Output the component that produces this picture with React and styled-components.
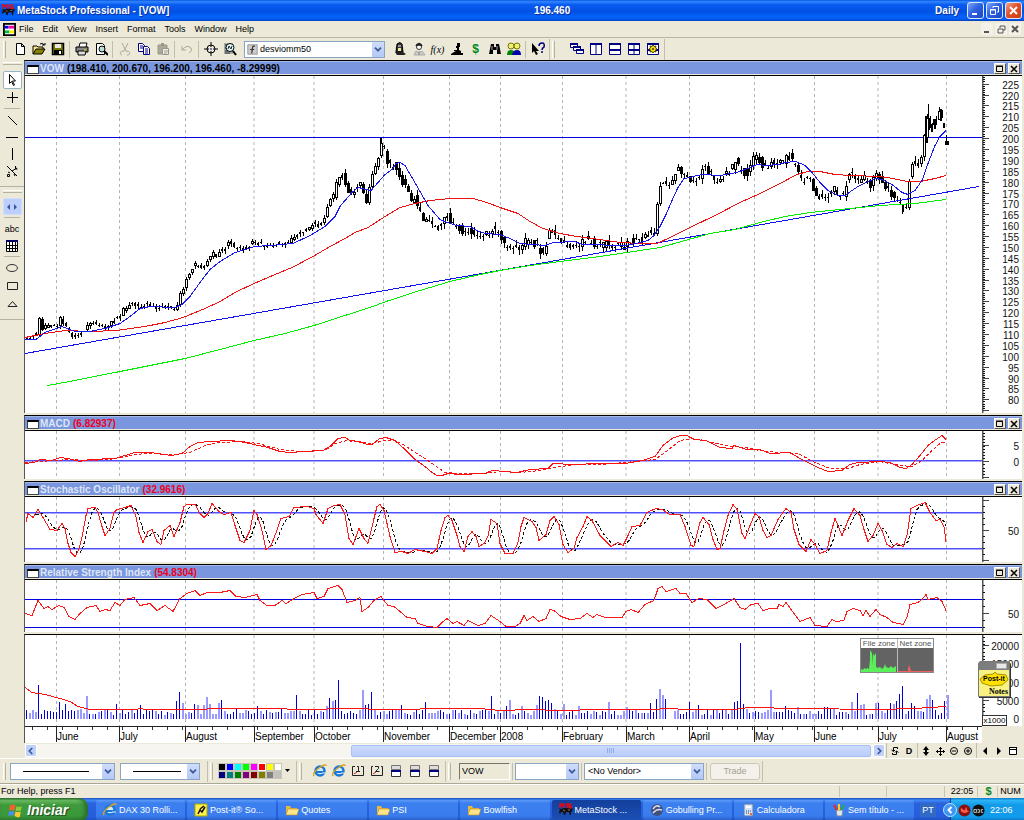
import React from 'react';
import styled, { createGlobalStyle, css } from 'styled-components';

const GlobalStyle = createGlobalStyle`
    * {
        box-sizing: border-box;
    }

    body {
        margin: 0;
        background: #ece9d8;
        color: #000;
        font-family: 'Liberation Sans', Arial, sans-serif;
        font-size: 9px;
    }

    button, input, select {
        font: inherit;
        color: inherit;
        margin: 0;
        padding: 0;
    }
`;

/* ---------- chart data ---------- */

// Time axis: [x position, label, wide line]
const MONTHS = [
    [56, 'June'], [119, 'July'], [185, 'August'], [254, 'September', true], [314, 'October', true],
    [383, 'November'], [449, 'December'], [500, '2008'], [562, 'February'], [626, 'March', true],
    [689, 'April'], [754, 'May'], [814, 'June'], [878, 'July', true], [946, 'August'],
];

const CLOSES = '25,337 35,337 39,320 42,329 47,325 52,326 57,325 60,318 65,325 70,334 76,338 80,332 85,331 88,324 92,322 100,327 107,326 112,320 119,318 123,310 128,306 134,303 139,308 145,303 150,306 156,309 162,307 170,307 175,310 179,297 184,285 187,277 191,269 195,264 200,267 204,267 209,258 213,254 216,259 219,252 225,248 228,243 230,241 234,248 240,248 244,250 248,246 254,241 260,244 266,247 270,247 275,244 282,243 287,243 292,238 297,233 303,230 309,227 314,223 319,225 323,224 325,212 329,200 332,197 335,194 337,173 340,176 343,177 346,185 349,193 352,191 355,189 358,184 361,178 364,205 368,195 371,182 374,165 377,160 380,145 383,142 385,157 387,162 390,166 395,165 398,175 402,182 405,188 408,194 411,199 415,198 418,210 421,216 424,220 428,224 432,226 437,229 440,229 443,222 447,217 452,225 457,228 462,231 467,229 471,231 476,235 480,238 484,236 488,233 491,229 494,229 497,230 500,236 504,246 508,249 514,248 520,248 524,242 528,241 533,243 537,245 541,254 545,247 549,228 553,231 557,239 562,240 567,244 572,248 577,247 583,242 588,240 595,245 605,244 615,246 622,246 626,243 630,240 636,242 641,240 645,234 650,233 654,230 656,216 658,195 661,180 665,184 671,183 673,178 677,170 680,171 684,174 690,179 694,184 698,178 702,168 707,170 711,174 715,180 720,180 725,174 729,170 732,167 734,157 738,167 742,172 745,173 748,173 751,160 755,157 760,162 765,167 770,164 778,163 783,160 787,153 790,158 794,166 797,173 800,180 803,182 808,176 811,182 814,193 818,198 822,196 827,198 831,191 835,190 838,195 843,196 847,180 850,176 854,174 858,180 862,178 866,180 870,187 875,175 880,180 884,185 888,188 891,196 895,200 898,203 902,206 906,205 908,195 910,165 914,162 918,166 921,157 923,145 926,117 929,130 932,125 935,118 938,116 941,113 944,127';
const FAST_AVERAGE = '25,339 36,339 45,332 62,326 75,331 90,331 105,328 120,323 130,316 140,308 150,306 175,307 182,304 190,296 200,282 210,269 220,261 235,252 255,246 270,245 293,243 310,235 325,226 335,216 340,206 345,200 352,192 358,187 366,189 371,190 378,182 385,174 392,169 396,163 400,162 405,165 412,177 420,191 428,205 440,219 447,222 457,225 470,226 477,230 485,233 500,234 510,238 520,243 545,245 553,242 575,241 582,244 626,245 640,242 648,240 654,235 660,226 666,214 672,200 678,187 684,178 690,177 697,175 703,174 720,175 737,172 750,167 757,164 767,165 778,164 785,162 796,161 805,165 812,172 820,182 828,190 838,195 845,195 852,190 858,186 866,182 875,178 882,179 892,184 902,192 908,194 915,190 922,180 928,163 935,145 940,136 946,130';
const SLOW_AVERAGE = '25,337 45,333 65,330 90,331 117,330 145,326 165,322 183,317 205,308 220,301 235,292 254,283 275,274 292,267 313,256 330,246 345,238 355,232 368,227 385,216 400,207 415,203 430,200 450,198 473,198 487,202 500,207 518,213 530,221 543,228 560,233 577,236 600,239 620,242 642,243 657,243 670,237 690,227 715,215 740,202 760,193 780,183 797,174 808,171 820,171 835,174 850,175 880,176 893,178 907,181 920,181 935,178 946,175';
const LONG_AVERAGE = '47,385 70,381 120,371 185,358 220,349 254,340 285,333 314,325 345,315 370,307 386,301 420,290 450,281 480,274 500,270 530,265 560,261 600,256 640,250 660,247 685,240 710,233 735,229 760,222 785,216 810,212 850,208 880,205 915,203 946,199';
const MACD = '25,463 34,462 40,459 52,460 60,457 68,458 80,461 90,459 115,458 125,455 135,452 150,452 172,455 182,453 190,446 198,442 210,441 230,440 240,441 254,444 268,447 280,451 290,452 305,451 323,450 330,446 338,438 345,437 350,440 360,441 367,444 372,444 380,438 386,437 395,440 405,449 415,459 425,466 432,472 437,475 442,475 448,473 460,474 485,473 492,470 505,471 517,472 530,469 548,468 553,463 572,464 600,463 625,463 642,460 655,456 663,445 672,438 680,435 687,435 694,439 706,440 720,447 732,448 734,445 747,449 760,449 770,453 790,452 800,458 808,462 818,467 828,471 842,470 850,464 858,462 880,461 890,462 900,467 906,468 912,464 920,455 928,445 936,439 942,435 946,439';
const MACD_SIGNAL = '25,462 40,461 55,460 70,459 90,460 110,459 130,455 145,453 175,454 190,452 205,445 220,442 240,441 258,443 280,449 300,451 325,450 335,443 347,440 360,442 372,443 385,440 395,440 405,445 415,452 425,458 435,465 445,472 460,473 485,473 500,471 520,472 540,470 555,467 575,464 600,464 625,462 655,459 665,452 680,440 692,438 705,440 725,445 745,447 760,450 780,452 798,453 815,462 830,468 848,468 860,464 880,461 900,465 912,466 922,460 932,450 940,443 946,441';
const STOCHASTIC = '26,521 28,513 33,517 38,509 43,517 50,529 57,530 62,523 65,528 68,543 71,552 75,556 79,549 82,537 86,515 88,508 95,507 98,512 102,526 105,535 110,528 114,512 117,509 125,507 131,505 136,516 139,532 143,542 148,531 152,529 157,541 161,544 164,530 170,525 174,536 180,522 184,506 187,504 195,504 200,513 204,517 208,513 212,503 219,511 224,514 231,512 235,525 240,540 244,542 250,530 254,510 257,514 262,530 266,549 271,545 275,535 281,518 289,516 294,507 307,506 314,508 316,514 323,523 328,508 334,505 340,504 345,514 349,538 353,544 359,528 364,538 368,543 374,518 377,506 380,504 384,510 390,536 395,552 402,551 408,553 415,549 425,551 432,553 437,548 441,530 445,517 448,515 452,520 457,535 460,546 464,551 468,536 472,531 476,536 479,546 484,543 488,536 491,519 497,523 500,543 505,553 513,553 518,542 521,526 524,517 532,521 536,527 539,540 546,534 550,520 554,516 559,524 563,544 568,552 574,548 577,537 583,526 587,516 592,520 600,535 607,542 611,546 618,542 623,545 628,535 632,526 640,525 647,512 656,508 662,509 670,514 680,514 685,526 691,545 694,546 700,522 703,517 709,524 713,539 717,549 720,548 724,530 728,515 733,504 737,509 742,533 745,538 750,525 755,513 759,516 763,530 767,537 771,535 778,519 786,508 791,512 794,529 799,544 806,551 811,539 815,544 820,553 827,550 831,532 835,518 842,535 848,520 854,508 860,515 864,529 868,541 873,535 878,523 882,530 887,544 892,547 897,543 903,546 907,535 911,508 917,505 925,502 930,512 936,520 940,519 944,526 946,541';
const RSI = '25,613 32,615 38,600 44,608 48,606 52,609 59,605 64,607 69,616 75,619 80,613 87,607 96,605 100,611 105,609 110,610 115,602 120,605 125,599 134,597 140,605 150,603 157,610 165,605 173,611 180,598 187,593 195,590 200,595 207,592 220,592 230,590 236,596 245,597 257,594 260,600 267,605 275,605 282,600 286,603 296,597 302,594 314,592 317,598 324,596 328,588 338,585 342,589 347,602 355,600 360,597 362,611 368,607 374,600 381,596 384,600 388,605 394,606 400,611 407,617 415,618 418,623 428,626 437,627 442,622 447,618 453,623 457,621 464,625 468,620 478,625 485,623 488,619 491,615 500,621 506,626 515,626 520,623 524,615 527,620 533,616 539,621 546,618 550,609 554,610 561,616 570,619 580,618 587,613 593,617 597,614 605,617 622,617 626,611 631,609 638,612 645,604 654,600 658,588 662,586 666,591 676,588 680,593 686,593 692,602 699,598 707,599 716,608 724,604 734,598 740,607 745,609 751,604 758,603 763,610 770,608 777,608 779,604 783,606 786,602 794,613 800,621 805,619 810,617 815,625 827,626 832,619 836,621 844,620 847,611 853,608 860,610 863,615 866,610 870,616 876,609 880,614 887,617 893,622 903,624 907,617 910,604 918,602 922,599 926,594 928,599 937,597 942,601 946,610';
const VOLUME_AVERAGE = '25,687 32,692 45,694 60,698 70,701 78,706 90,709 135,709 141,708 145,709 185,709 230,708 260,708 314,709 340,708 395,709 445,708 480,708 500,710 530,709 560,710 600,709 655,709 665,708 690,709 735,709 748,707 800,708 878,709 915,708 930,707 946,706';

// Volume peaks: x position -> bar height
const VOLUME_PEAKS = {
    38: 34, 59: 17, 65: 15, 86: 23, 116: 15, 140: 14, 176: 18, 179: 27, 182: 16, 194: 15, 197: 14,
    203: 14, 206: 22, 209: 15, 218: 16, 221: 19, 257: 13, 281: 11, 296: 24, 326: 13, 329: 21, 332: 18, 335: 19,
    338: 39, 362: 29, 365: 14, 368: 15, 371: 27, 401: 14, 425: 17, 491: 23, 506: 13, 509: 19, 521: 13,
    536: 14, 539: 23, 542: 22, 545: 18, 548: 19, 551: 16, 563: 15, 578: 13, 608: 17, 626: 12, 650: 16, 656: 20, 659: 30, 662: 24,
    665: 20, 668: 0, 671: 0, 689: 17, 698: 14, 734: 17, 737: 18, 740: 76, 743: 15, 770: 29, 785: 13, 797: 12, 824: 12, 827: 12, 851: 17,
    857: 26, 860: 14, 863: 15, 875: 16, 878: 16, 890: 16, 893: 15, 896: 18, 899: 25, 902: 33, 911: 16, 914: 13, 926: 20, 929: 24, 932: 19, 944: 18,
};

const parse = (text) => text.split(' ').map((pair) => pair.split(',').map(Number));
const noise = (n) => {
    const value = Math.sin(n * 127.1 + 11.7) * 43758.5453;
    return value - Math.floor(value);
};

function valueAt(points, x) {
    for (let i = 1; i < points.length; i += 1) {
        if (x <= points[i][0]) {
            const [x0, y0] = points[i - 1];
            const [x1, y1] = points[i];
            return y0 + ((y1 - y0) * (x - x0)) / (x1 - x0);
        }
    }
    return points[points.length - 1][1];
}

// Builds one path with every dark part and one with the hollow part of rising days
function buildCandles() {
    const closes = parse(CLOSES);
    let dark = '';
    let hollow = '';
    for (let i = 0; i < 306; i += 1) {
        const x = 26 + i * 3;
        const spread = i > 105 ? 8 : 4;
        const open = Math.round(valueAt(closes, x - 2) + (noise(i) - 0.5) * spread);
        const close = Math.round(valueAt(closes, x + 1) + (noise(i + 400) - 0.5) * spread);
        const top = Math.min(open, close);
        const height = Math.max(Math.abs(open - close), 1);
        const reach = i > 105 ? 5 : 3;
        const high = top - Math.round(noise(i + 900) * reach);
        const low = top + height + Math.round(noise(i + 1300) * reach);
        dark += `M${x + 1} ${high}h1V${low}h-1z`;
        if (close < open && height > 2) {
            dark += `M${x} ${top}h3v${height}h-3z`;
            hollow += `M${x + 1} ${top + 1}h1v${height - 2}h-1z`;
        } else {
            dark += `M${x} ${top}h${height > 5 ? 3 : 2}v${height}h-${height > 5 ? 3 : 2}z`;
        }
    }
    dark += 'M945 141h4v4h-4zM946 135h1v10h-1zM928 104h1v20h-1zM902 205h1v9h-1zM380 138h1v6h-1z';
    dark += 'M925 116h3v27h-3zM928 118h2v12h-2zM931 124h2v8h-2zM934 119h2v10h-2zM940 109h2v12h-2zM943 123h2v5h-2z';
    return { dark, hollow };
}

function buildVolume() {
    let strong = '';
    let soft = '';
    for (let i = 0; i < 308; i += 1) {
        const x = 26 + i * 3;
        let height = 4 + Math.round(noise(i + 77) * 6);
        if (x in VOLUME_PEAKS) height = VOLUME_PEAKS[x];
        if (i === 307) height = 24;
        if (noise(i + 31) > 0.55 && height < 60) soft += `M${x} ${719 - height}h2v${height}h-2z`;
        else strong += `M${i === 307 ? 946 : x} ${719 - height}h1v${height}h-1z`;
    }
    return { strong, soft };
}

const candles = buildCandles();
const volume = buildVolume();
const stochastic = parse(STOCHASTIC);
const STOCHASTIC_SIGNAL = Array.from({ length: 308 }, (_, i) => {
    const x = 26 + i * 3;
    const mean = (valueAt(stochastic, x - 1) + valueAt(stochastic, x - 4) + valueAt(stochastic, x - 7)) / 3;
    return `${x},${mean.toFixed(1)}`;
}).slice(2).join(' ');

/* ---------- icons ---------- */

const ICONS = {
    logo: (
        <>
            <path d="M1 5V0l2 3 2-3v5M12 1H8v2h4v2H8" fill="none" stroke="#f00" strokeWidth="1.3" />
            <path d="M0 5l2 1 3-1 4 0 3 1 2-1-1 3-1 1v3h-1l-1-3H7l-1 3H5l-1-3-2 0-1 2-1-2 1-2z" fill="#111" />
            <path d="M4 7l2 1M9 7h2" stroke="#a66" />
        </>
    ),
    doc: (
        <>
            <path d="M1 1h12v12H1z" fill="#fff" stroke="#000" strokeWidth="2" />
            <path d="M2 3h4v3H2z" fill="#00e" /><path d="M6 3h6v3H6z" fill="#f0a" />
            <path d="M2 8h5v3H2z" fill="#0b4" /><path d="M7 8h5v3H7z" fill="#fe0" />
        </>
    ),
    page: <path d="M3.500 1.500h5l3 3v8h-8zM8.500 1.500v3h3" fill="#fff" stroke="#000" />,
    open: (
        <>
            <path d="M1 12V4h4l1 1h5v2" fill="#ffe97a" stroke="#000" />
            <path d="M1 12l3-5h9l-3 5z" fill="#8a8200" stroke="#000" />
            <path d="M8 2q3-2 4 1m-2 0h3V1" fill="none" stroke="#000" />
        </>
    ),
    save: (
        <>
            <path d="M1.500 1.500h11v11h-11z" fill="#777a00" stroke="#000" strokeWidth="1.500" />
            <path d="M4 2h6v4H4z" fill="#e8e8e0" /><path d="M3 8h8v4H3z" fill="#000" /><path d="M8 9h2v3H8z" fill="#fff" />
        </>
    ),
    print: (
        <>
            <path d="M4 5l1-4h7l-1 4" fill="#fff" stroke="#000" />
            <path d="M1 5h12v5H1z" fill="#888" stroke="#000" />
            <path d="M3 9h8l-1 4H3z" fill="#ddd" stroke="#000" /><path d="M9 8h2" stroke="#ee0" />
        </>
    ),
    preview: (
        <>
            <path d="M2.500 1.500h6l2 2v9h-8z" fill="#fff" stroke="#000" />
            <circle cx="8" cy="7" r="3" fill="#bdd" stroke="#000" /><path d="M10 9l4 4" stroke="#000" strokeWidth="2" />
        </>
    ),
    cut: <path d="M4 1l4 8M10 1L6 9M4 13a2 2 0 1 1 2-3M9 13a2 2 0 1 0-1-3" fill="none" stroke="#aaa89a" />,
    copy: (
        <>
            <path d="M1.500 1.500h4l2 2v6h-6z" fill="#fff" stroke="#000080" /><path d="M3 4h3M3 6h3" stroke="#000080" />
            <path d="M6.500 4.500h4l2 2v6h-6z" fill="#fff" stroke="#000080" /><path d="M8 7h3M8 9h3M8 11h3" stroke="#000080" />
        </>
    ),
    paste: (
        <>
            <path d="M2 3h9v9H2z" fill="#aaa89a" stroke="#999788" /><path d="M5 1h3v3H5z" fill="#999788" />
            <path d="M6.500 6.500h6v6h-6z" fill="#eee" stroke="#999788" /><path d="M8 9h4M8 11h3" stroke="#999788" />
        </>
    ),
    undo: <path d="M2 4v4h4M2 8q5-6 9-2 2 3-2 5" fill="none" stroke="#aaa89a" />,
    target: (
        <>
            <circle cx="7" cy="7" r="4" fill="none" stroke="#000" /><path d="M7 0v5M7 9v5M0 7h5M9 7h5" stroke="#000" />
            <path d="M6 7h2" stroke="#00c" />
        </>
    ),
    search: (
        <>
            <path d="M1 1h9v11H1z" fill="#aaa" /><path d="M2 3h3M2 6h2M2 9h3M2 11h5" stroke="#333" />
            <circle cx="7" cy="5.500" r="4" fill="#dff" stroke="#000" /><path d="M5 7l1-3 2 3 1-3" fill="none" stroke="#222" />
            <path d="M10 9l3 4" stroke="#000" strokeWidth="2" />
        </>
    ),
    expert: (
        <>
            <path d="M4 2q3-3 5 0l1 8H3z" fill="#333" stroke="#000" />
            <path d="M5 3h3v2H5z" fill="#999" /><path d="M5 6h3v3H5z" fill="#ee9" />
            <path d="M2 10h8l3 2-2 1H4z" fill="#222" />
        </>
    ),
    person: (
        <>
            <circle cx="7" cy="5" r="2.500" fill="#fff" stroke="#333" /><path d="M4 4q3-5 6 0M4 3h6" fill="none" stroke="#222" strokeWidth="1.500" />
            <path d="M2 13l2-4 3 2 3-2 3 4z" fill="#ccc" stroke="#aaa" /><path d="M7 9v4" stroke="#888" />
        </>
    ),
    microscope: (
        <path d="M7 1h3v4H9v3l2 1v2h2v2H1v-1l3-2h2L4 9V8h3V6H6V4h1z" fill="#000" />
    ),
    binoculars: (
        <>
            <path d="M3 2h3v3h2V2h3l1 5 1 5H9V8H5v4H1l1-5z" fill="#000" /><path d="M4 4v4M9 4v4" stroke="#aaa" />
        </>
    ),
    people: (
        <>
            <circle cx="4" cy="4" r="3" fill="#ee7" stroke="#770" /><circle cx="10" cy="4" r="3" fill="#ee7" stroke="#770" />
            <path d="M0 13q0-5 4-5t4 5z" fill="#080" /><path d="M5 13q1-5 5-5t4 5z" fill="#00a" />
        </>
    ),
    help: (
        <>
            <path d="M1 1v10l2-2 2 4 2-1-2-3h3z" fill="#000" />
            <path d="M8 4q0-3 3-3t2 4q-2 1-2 3M11 9v2" fill="none" stroke="#000080" strokeWidth="1.500" />
        </>
    ),
    cascade: (
        <>
            <path d="M.5 1.500h7v4h-7z" fill="#fff" stroke="#000080" /><path d="M0 2h8" stroke="#000080" strokeWidth="2" />
            <path d="M3.500 4.500h7v4h-7z" fill="#fff" stroke="#000080" /><path d="M3 5h8" stroke="#000080" strokeWidth="2" />
            <path d="M6.500 7.500h7v4h-7z" fill="#fff" stroke="#000080" /><path d="M6 8h8" stroke="#000080" strokeWidth="2" />
        </>
    ),
    tileColumns: (
        <><path d="M1.500 1.500h11v11h-11zM7 2v10" fill="#fff" stroke="#000080" /><path d="M1 2h12" stroke="#000080" strokeWidth="2" /></>
    ),
    tileRows: (
        <><path d="M1.500 1.500h11v11h-11z" fill="#fff" stroke="#000080" /><path d="M1 2h12M1 8h12" stroke="#000080" strokeWidth="2" /></>
    ),
    tileGrid: (
        <><path d="M1.500 1.500h11v11h-11zM7 2v10" fill="#fff" stroke="#000080" /><path d="M1 2h12M1 8h12" stroke="#000080" strokeWidth="2" /></>
    ),
    tileStar: (
        <>
            <path d="M1.500 1.500h11v11h-11z" fill="#fff" stroke="#000080" /><path d="M1 2h12M1 8h12" stroke="#000080" strokeWidth="2" />
            <path d="M7 3l1 1.500 2-.5-.5 2L11 7l-1.500 1 .5 2-2-.5L7 11 6 9.500 4 10l.500-2L3 7l1.500-1L4 4l2 .5z" fill="#fd0" stroke="#440" />
            <circle cx="7" cy="7" r="1" fill="#333" />
        </>
    ),
    pointer: <path d="M4.500 1.500v9l2-2 2 4 1-.5-2-4h3z" fill="#fff" stroke="#000" />,
    cross: <path d="M7.500 1v11M2 6.500h11" stroke="#000" />,
    diagonal: <path d="M3 3l9 9" stroke="#000" />,
    horizontal: <path d="M1 7.500h12" stroke="#000" />,
    vertical: <path d="M7.500 1v12" stroke="#000" />,
    ratio: <path d="M2 2l10 10M10.500 2v3h2M2.500 10.500h2v2h-2zM3 8l2 1M7 7l5-3M9 10l1 2" fill="none" stroke="#000" />,
    arrows: <path d="M5 4L2 7l3 3zM9 4l3 3-3 3z" fill="#3a56a0" />,
    table: (
        <>
            <path d="M1.500 1.500h11v11h-11z" fill="#fff" stroke="#000" />
            <path d="M1 2.500h12M1 6.500h12M1 9.500h12M4.500 1v12M7.500 1v12M10.500 1v12" fill="none" stroke="#000" />
            <path d="M1 2h12" stroke="#000060" strokeWidth="2" />
        </>
    ),
    ellipse: <ellipse cx="7" cy="7" rx="5.500" ry="3.500" fill="none" stroke="#333" />,
    rectangle: <path d="M2.500 3.500h10v7h-10z" fill="none" stroke="#222" />,
    triangle: <path d="M7.500 4.500L12 9.500H3z" fill="none" stroke="#222" />,
    chevronLeft: <path d="M8.500 3.500L5 7l3.500 3.500" fill="none" stroke="#3c5a96" strokeWidth="2" />,
    chevronRight: <path d="M5.500 3.500L9 7l-3.500 3.500" fill="none" stroke="#3c5a96" strokeWidth="2" />,
    chevronDown: <path d="M3.500 5.500L7 9l3.500-3.500" fill="none" stroke="#3c5a96" strokeWidth="2" />,
    refresh: <path d="M9.500 5V3.500h-4V7M4.500 9v1.500h4V7M3.500 6l2 1.500 1.500-1.500M7 8.500L8.500 7l2 1.500" fill="none" stroke="#000" />,
    updown: <path d="M7 2l3 4H8v2h2l-3 4-3-4h2V6H4z" fill="#000" />,
    move: <path d="M7.500 3v9M3 7.500h9M6 4.500h3M6 10.500h3M4.500 6v3M10.500 6v3" fill="none" stroke="#000" />,
    zoomOut: <><circle cx="7" cy="7" r="3.500" fill="none" stroke="#000" /><path d="M5 7h4" stroke="#000" /></>,
    zoomIn: <><circle cx="7" cy="7" r="3.500" fill="none" stroke="#000" /><path d="M5 7h4M7 5v4" stroke="#000" /></>,
    left: <path d="M9 3v8L5 7z" fill="#000" />,
    right: <path d="M5 3v8l4-4z" fill="#000" />,
    panel: <><path d="M3.500 3.500h7v7h-7z" fill="#fff" stroke="#000" /><path d="M3 3.500h8M3 5.500h8" stroke="#000" /></>,
    ie: (
        <>
            <circle cx="7" cy="7" r="4.500" fill="#d6ecff" stroke="#1878d8" strokeWidth="2.500" />
            <path d="M3 8h9" stroke="#1878d8" strokeWidth="2" /><path d="M9 9h4" stroke="#e9e9e0" />
            <path d="M1 12Q-1 9 6 4t7-2" fill="none" stroke="#d8a422" strokeWidth="1.500" />
        </>
    ),
    chartOne: <><path d="M4 2.500H1.500v9h11v-9H10M6 2.500h1.500v5M5 7.500h4" fill="none" stroke="#222" /><path d="M3 10l3-2" fill="none" stroke="#c22" /></>,
    chartTwo: <><path d="M3 2.500H1.500v9h11v-9H11M5 2.500h3.500v2L5.500 7.500h4" fill="none" stroke="#222" /><path d="M3 10l3-2" fill="none" stroke="#c22" /></>,
    layers: (
        <>
            <path d="M2.500 1.500h9v4h-9z" fill="#ddd" stroke="#777" />
            <path d="M2.500 6.500h9v6h-9z" fill="#fff" stroke="#333" /><path d="M2 7h10" stroke="#000080" strokeWidth="2" />
        </>
    ),
    windows: (
        <>
            <path d="M2 2q3-1 5 0L6 7Q3 6 1 7z" fill="#f2622c" /><path d="M8 3q3 1 5 0l-1 4q-3 1-5 0z" fill="#8bcb3c" />
            <path d="M1 8q2-1 5 0l-1 4q-3-1-5 0z" fill="#4a8df0" /><path d="M7 8q2 1 5 0l-1 5q-3 1-5-1z" fill="#fbc72d" />
        </>
    ),
    note: (
        <><path d="M1 1h12v12H1z" fill="#fff04a" stroke="#aa0" /><path d="M4 11l2-4 2 2 3-5M10 3l-4 3" fill="none" stroke="#111" strokeWidth="1.500" /></>
    ),
    folder: (
        <><path d="M1 12V3h4l1 2h6v7z" fill="#e9b840" /><path d="M1 12l2-6h11l-2 6z" fill="#ffe58a" stroke="#b8861c" strokeWidth=".6" /></>
    ),
    globe: (
        <><circle cx="7" cy="7" r="6" fill="#41507c" /><path d="M3 6q3-5 7-2M3 10q4-5 9-3" fill="none" stroke="#d5dcf0" strokeWidth="1.500" /></>
    ),
    calculator: (
        <><path d="M3 1h9v12H3z" fill="#cfe0f8" stroke="#5878a8" /><path d="M5 3h5v2H5z" fill="#fff" /><path d="M5 8h1M7 8h1M9 8h1M5 10h1M7 10h1" stroke="#345" /><path d="M9 10h2v2H9z" fill="#e63" /></>
    ),
    paint: (
        <><path d="M4 7h7l-1 6H5z" fill="#dfe6ee" stroke="#789" /><path d="M5 7L2 2" stroke="#e22" strokeWidth="2" /><path d="M7 7V1" stroke="#fc2" strokeWidth="2" /><path d="M9 7l3-5" stroke="#2a4" strokeWidth="2" /></>
    ),
    formula: <><path d="M1 1h12v12H1z" fill="#ccc" stroke="#888" /><path d="M10 3q-3-1-3 2L6 12M4 7h5" fill="none" stroke="#333" strokeWidth="1.500" /></>,
    trayBack: <><circle cx="7" cy="7" r="6.500" fill="#3d95f5" stroke="#bfe1ff" /><path d="M8.500 4L5.500 7l3 3" fill="none" stroke="#fff" strokeWidth="2" /></>,
    trayRed: <><circle cx="7" cy="7" r="6.500" fill="#8a1010" /><path d="M3 4l4 3 2-4 1 4 2 1-5 2-4-2z" fill="#ff5a4a" /></>,
    trayDark: <><circle cx="7" cy="7" r="6.500" fill="#111" /><path d="M2 6h3v3H2zM6 6h2v3H6M10 6h2M10 6v3h2" fill="none" stroke="#ccc" /></>,
};

const IconSvg = styled.svg`
    display: block;
    flex: none;
`;

const Icon = ({ name, size = 14 }) => (
    <IconSvg width={size} height={size} viewBox="0 0 14 14" aria-hidden="true">{ICONS[name]}</IconSvg>
);

/* ---------- window frame ---------- */

const Page = styled.div`
    display: flex;
    flex-direction: column;
    min-height: 100vh;
    min-width: 900px;
    background: #ece9d8;
    overflow: hidden;
`;

const TitleBar = styled.header`
    display: flex;
    justify-content: space-between;
    align-items: center;
    height: 21px;
    padding: 0 2px;
    color: #fff;
    font-weight: bold;
    font-size: 10px;
    text-shadow: 1px 1px #0a2f9c;
    background: linear-gradient(#0b55e0 0%, #2f86ff 8%, #0a5cf0 22%, #0050e4 55%, #0463fa 80%, #0358ee 92%, #0040b8 100%);
`;

const TitleGroup = styled.div`
    display: flex;
    align-items: center;
    gap: 2px;
`;

const PeriodLabel = styled.span`
    margin-right: 6px;
`;

const CaptionButton = styled.button`
    display: flex;
    align-items: center;
    justify-content: center;
    width: 17px;
    height: 17px;
    border: 1px solid #dfe8fb;
    border-radius: 3px;
    background: ${(props) => (props.$close
        ? 'linear-gradient(135deg, #f0a58c, #e0502a 45%, #c8400e)'
        : 'linear-gradient(135deg, #7fa8f8, #2f62e0 45%, #1c48c4)')};
`;

const MenuBar = styled.nav`
    display: flex;
    align-items: center;
    height: 17px;
    padding: 0 3px;
    border-bottom: 1px solid #b8b5a4;
`;

const MenuItem = styled.button`
    margin-right: 9px;
    border: 0;
    background: none;

    &:first-of-type {
        margin-left: 3px;
    }
`;

const MenuButtons = styled.div`
    display: flex;
    gap: 2px;
    margin-left: auto;
`;

const ChildButton = styled.button`
    width: 12px;
    height: 12px;
    border: 0;
    background: #f3f1e8;
    display: flex;
    align-items: center;
    justify-content: center;
`;

const Toolbar = styled.div`
    display: flex;
    align-items: center;
    height: 22px;
    padding-left: 3px;
`;

const Grip = styled.span`
    flex: none;
    width: 3px;
    height: 17px;
    margin-right: ${(props) => props.$after || 4}px;
    border-left: 1px solid #fff;
    border-right: 1px solid #b5b2a0;
`;

const Separator = styled.span`
    flex: none;
    width: 1px;
    height: ${(props) => (props.$tall ? 21 : 17)}px;
    margin: 0 ${(props) => (props.$tight ? 1 : 2)}px;
    background: #c2bfae;
`;

const ToolButton = styled.button`
    display: flex;
    align-items: center;
    justify-content: center;
    flex: none;
    width: ${(props) => props.$width || 19}px;
    height: 17px;
    border: 1px solid transparent;
    border-radius: 2px;
    background: none;
    font-size: ${(props) => (props.$size || 10)}px;
    font-weight: ${(props) => (props.$bold ? 'bold' : 'normal')};
    color: ${(props) => props.$color || '#000'};

    ${(props) => props.$selected && css`
        background: #fff;
        border-color: #98b5c8;
        width: 19px;
        height: 18px;
    `}

    ${(props) => props.$pressed && css`
        background: #bcd0fb;
        border-color: #cfdcfb;
    `}
`;

const FormulaText = styled.i`
    font-family: 'Liberation Serif', serif;
`;

const SelectBox = styled.span`
    display: grid;
    align-items: center;
    flex: none;
    width: ${(props) => props.$width}px;
    height: 17px;
    margin: 0 ${(props) => props.$gap || 0}px;
    background: #fff;
    border: 1px solid #8aa5c4;

    > * {
        grid-area: 1 / 1;
    }

    > svg {
        pointer-events: none;
        margin-left: 2px;
    }
`;

const Select = styled.select`
    appearance: none;
    width: 100%;
    height: 15px;
    padding-left: ${(props) => props.$indent || 3}px;
    border: 0;
    outline: 0;
    background: transparent;
`;

const SelectArrow = styled.span`
    display: flex;
    align-items: center;
    justify-content: center;
    justify-self: end;
    width: 12px;
    height: 15px;
    border-radius: 1px;
    background: linear-gradient(#cfdcfd, #b4c8f6);
    pointer-events: none;
`;

const Workspace = styled.main`
    display: flex;
    align-items: stretch;
`;

const SideBar = styled.aside`
    display: flex;
    flex-direction: column;
    align-items: center;
    flex: none;
    width: 24px;
`;

const SideGrip = styled.span`
    flex: none;
    width: 19px;
    height: 3px;
    margin: ${(props) => (props.$top ? '2px 0 6px' : '3px 0 5px')};
    border-top: 1px solid #fff;
    border-bottom: 1px solid #b5b2a0;
`;

const SideLine = styled.span`
    flex: none;
    width: ${(props) => (props.$full ? '100%' : '16px')};
    height: 1px;
    margin: ${(props) => (props.$full ? '7px 0 0' : '2px 0')};
    background: #b5b2a0;
`;

const ShapeGroup = styled.div`
    display: flex;
    flex-direction: column;
    gap: 1px;
`;

/* ---------- charts ---------- */

const Charts = styled.section`
    flex: 1;
    min-width: 0;
    margin-right: 2px;
`;

const Pane = styled.article`
    position: relative;
    border-top: 1px solid #000;
    border-left: 1px solid #555;
    margin-bottom: ${(props) => (props.$last ? 0 : 2)}px;
`;

const PaneHeader = styled.h2`
    display: flex;
    align-items: center;
    height: 15px;
    margin: 0;
    padding: 0 2px;
    border-top: 1px solid #a9b9e6;
    border-bottom: 1px solid #000;
    background: #7996de;
    box-shadow: inset 0 -1px #ece9d8;
    color: #dfe6f7;
    font-size: 10px;
    line-height: 12px;
    font-weight: bold;
`;

const WindowMark = styled.span`
    width: 12px;
    height: 9px;
    margin: 1px 1px 0 0;
    border: 1px solid #444;
    border-top: 2px solid #000;
    background: #fff;
`;

const PaneValue = styled.span`
    margin-left: 3px;
    color: ${(props) => props.$color || '#f0001c'};
`;

const PaneButtons = styled.span`
    display: flex;
    gap: 2px;
    margin-left: auto;
`;

const PaneButton = styled.button`
    display: flex;
    align-items: center;
    justify-content: center;
    width: 12px;
    height: 11px;
    border: 1px solid;
    border-color: #fff #555 #555 #fff;
    background: #ece9d8;
`;

const PaneBody = styled.div`
    display: flex;
    background: #fff;
`;

const Plot = styled.svg`
    display: block;
    flex: 1;
    min-width: 0;
`;

const Axis = styled.svg`
    display: block;
    flex: none;
    font-size: 10px;
    fill: #111;
`;

const TimeAxis = styled.svg`
    display: block;
    width: calc(100% - 40px);
    background: #fff;
    font-size: 10px;
`;

const GridLines = ({ top, bottom }) => (
    <g shapeRendering="crispEdges">
        {MONTHS.map(([x, label, wide]) => (
            <line
                key={x}
                x1={wide ? x : x + 0.5}
                x2={wide ? x : x + 0.5}
                y1={top}
                y2={bottom}
                stroke={wide ? '#dadada' : '#b4b4b4'}
                strokeWidth={wide ? 2 : 1}
                strokeDasharray="3 3"
            />
        ))}
    </g>
);

const Level = ({ y, soft }) => (
    <g shapeRendering="crispEdges">
        <rect x="25" y={y} width="957" height="1" fill={soft ? '#5050ff' : '#0000e0'} />
        {soft && <rect x="25" y={y + 1} width="957" height="1" fill="#a8a8ff" />}
    </g>
);

// The half pixel shift keeps flat stretches on whole device pixels
const Series = ({ points, color, dash }) => (
    <polyline
        points={points}
        fill="none"
        stroke={color}
        strokeWidth="1"
        strokeDasharray={dash}
        shapeRendering="crispEdges"
        transform="translate(0 0.5)"
    />
);

const ValueAxis = ({ top, height, labels, minor, major = [] }) => (
    <Axis width="40" height={height} viewBox={`982 ${top} 40 ${height}`}>
        <g shapeRendering="crispEdges">
            <rect x="982" y={top} width="1" height={height} fill="#555" />
            <rect x="983" y={top} width="1" height={height} fill="#aaa" />
            {minor.map((y) => <rect key={y} x="983" y={Math.round(y)} width="2" height="1" fill="#111" />)}
            {[...labels.map(([y]) => y), ...major].map((y) => (
                <rect key={y} x="983" y={Math.round(y)} width="6" height="1" fill="#444" />
            ))}
        </g>
        {labels.map(([y, text]) => (
            <text key={text} x="1019" y={Math.round(y) + 5} textAnchor="end">{text}</text>
        ))}
    </Axis>
);

const range = (from, to, step) => {
    const list = [];
    for (let y = from; y <= to; y += step) list.push(y);
    return list;
};

const PRICE_LABELS = Array.from({ length: 30 }, (_, i) => [83.7 + i * 10.883, 225 - i * 5]);

const Header = ({ title, value, color }) => (
    <PaneHeader>
        <WindowMark />
        {title}
        <PaneValue $color={color}>{value}</PaneValue>
        <PaneButtons>
            <PaneButton type="button" aria-label={`Maximize ${title}`}>
                <svg width="8" height="8" viewBox="0 0 8 8"><path d="M.5 1.500h6v5h-6zM0 1h7" fill="none" stroke="#000" /></svg>
            </PaneButton>
            <PaneButton type="button" aria-label={`Close ${title}`}>
                <svg width="8" height="8" viewBox="0 0 8 8"><path d="M1 1l6 6M7 1L1 7" stroke="#000" strokeWidth="1.500" /></svg>
            </PaneButton>
        </PaneButtons>
    </PaneHeader>
);

const ChartBody = ({ top, height, axis, children }) => (
    <PaneBody>
        <Plot height={height} viewBox={`25 ${top} 957 ${height}`} preserveAspectRatio="none">
            <GridLines top={top} bottom={top + height} />
            {children}
        </Plot>
        <ValueAxis top={top} height={height} {...axis} />
    </PaneBody>
);

// Small traffic monitor that floats over the volume chart
const Monitor = styled.div`
    position: absolute;
    top: 3px;
    right: 88px;
    display: grid;
    grid-template-columns: 1fr 1fr;
    width: 74px;
    height: 35px;
    border: 1px solid #888;
    background: #636363;
    color: #555;
    text-align: center;
    white-space: nowrap;
`;

const MonitorCell = styled.div`
    overflow: hidden;
    border-left: ${(props) => (props.$second ? '1px solid #bbb' : '0')};
`;

const MonitorTitle = styled.div`
    background: #fff;
    height: 9px;
    font-size: 8px;
    line-height: 9px;
`;

const PostIt = styled.div`
    position: absolute;
    top: 26px;
    right: 12px;
    width: 32px;
    height: 36px;
    border: 1px solid #777;
    border-radius: 3px 3px 0 0;
    background: #f7f283;
    box-shadow: 1px 1px #333;
    font-family: 'Liberation Serif', serif;
    font-weight: bold;
    font-size: 8px;
    text-align: right;
`;

const PostItTop = styled.div`
    display: flex;
    align-items: center;
    justify-content: flex-end;
    height: 8px;
    padding-right: 2px;
    background: #7d7d7d;

    &::after {
        content: '';
        width: 9px;
        height: 4px;
        background: #e8e8e8;
        border: 1px solid #aaa;
    }
`;

const PostItLogo = styled.div`
    display: grid;
    align-items: center;
    height: 18px;
    font-family: 'Liberation Sans', sans-serif;
    font-size: 7px;
    line-height: 18px;
    text-align: center;

    > * {
        grid-area: 1 / 1;
    }
`;

const PostItName = styled.div`
    line-height: 8px;
    padding-right: 1px;
`;

const Multiplier = styled.span`
    position: absolute;
    right: 15px;
    top: 80px;
    width: 25px;
    height: 11px;
    border: 1px solid #333;
    background: #fff;
    font-size: 8px;
    line-height: 10px;
    text-align: center;
`;

/* ---------- bottom bars ---------- */

const ScrollRow = styled.div`
    display: flex;
    align-items: center;
    height: 15px;
`;

const ScrollTrack = styled.div`
    display: flex;
    flex: 1;
    align-items: center;
    height: 14px;
    margin-left: 1px;
    background: #f6f5f0;
`;

const ScrollButton = styled.button`
    display: flex;
    align-items: center;
    justify-content: center;
    flex: none;
    width: 12px;
    height: 13px;
    border: 1px solid #fff;
    border-radius: 2px;
    background: #bfd1fb;
`;

const ScrollSpace = styled.span`
    flex: 315;
`;

const ScrollThumb = styled.span`
    display: flex;
    align-items: center;
    justify-content: center;
    flex: 519;
    height: 12px;
    margin-right: 2px;
    border: 1px solid #a9c0f3;
    border-radius: 2px;
    background: linear-gradient(#ccdafd, #b9ccfa);
`;

const ChartTools = styled.div`
    display: flex;
    align-items: center;
    flex: none;
    width: 137px;
    height: 15px;
`;

const BottomBar = styled(Toolbar)`
    height: 25px;
    border-top: 1px solid #fff;
`;

const Palette = styled.div`
    display: grid;
    grid-template-columns: repeat(8, 8px);
    grid-auto-rows: 8px;
    margin-left: 1px;
`;

const Swatch = styled.button`
    width: 8px;
    height: 8px;
    border: 1px solid ${(props) => (props.$active ? '#fff' : '#c9c6b8')};
    background: ${(props) => props.$color};
`;

const SymbolInput = styled.input`
    width: 51px;
    height: 17px;
    padding: 0 2px;
    border: 1px solid;
    border-color: #77756a #fff #fff #77756a;
    border-radius: 0;
    background: #ece9d8;
    outline: 0;
`;

const TradeButton = styled.button`
    width: 50px;
    height: 17px;
    margin-left: 1px;
    border: 1px solid #c9c7ba;
    border-radius: 3px;
    background: #f3f1ea;

    &:disabled {
        color: #a5a293;
    }
`;

const StatusBar = styled.footer`
    display: flex;
    align-items: center;
    height: 15px;
    padding: 0 3px 0 1px;
    border-top: 1px solid #aaa797;
    box-shadow: inset 0 1px #fff;
`;

const StatusCell = styled.span`
    width: ${(props) => props.$width}px;
    margin-left: ${(props) => (props.$first ? 'auto' : '0')};
    padding-left: 2px;
    border-left: 1px solid #c8c5b5;
    line-height: 11px;
    min-height: 11px;
    text-align: center;
    color: ${(props) => props.$color || '#000'};
    font-weight: ${(props) => (props.$color ? 'bold' : 'normal')};
    font-size: ${(props) => (props.$color ? 11 : 9)}px;
`;

const TaskBar = styled.footer`
    display: flex;
    align-items: stretch;
    flex: 1;
    min-height: 24px;
    max-height: 24px;
    color: #fff;
    background: linear-gradient(#1a4fbe 0%, #3f8af5 9%, #2a62de 22%, #245ddb 80%, #1b46a8 100%);
`;

const StartButton = styled.button`
    display: flex;
    align-items: center;
    gap: 4px;
    width: 88px;
    padding-left: 8px;
    border: 0;
    border-radius: 0 9px 9px 0;
    background: linear-gradient(#2c6c2c 0%, #6cbf64 10%, #3f9a3c 28%, #3a983a 75%, #2a6f2a 100%);
    box-shadow: inset -3px 0 4px #2a6a2a;
    color: #fff;
    font-size: 14px;
    font-style: italic;
    font-weight: bold;
    text-shadow: 1px 1px 1px #1c4a1c;
`;

const Tasks = styled.div`
    display: flex;
    flex: 1;
    gap: 2px;
    margin-left: 8px;
    min-width: 0;
`;

const TaskButton = styled.button`
    display: flex;
    align-items: center;
    flex: 1;
    gap: 2px;
    min-width: 0;
    height: 20px;
    margin-top: 2px;
    padding-left: 7px;
    border: 0;
    border-radius: 2px;
    white-space: nowrap;
    color: #fff;
    background: ${(props) => (props.$active
        ? 'linear-gradient(#123f9c, #1c4fb4)'
        : 'linear-gradient(#5e9bf8 0%, #3c80f0 15%, #3a7cee 80%, #2a62cc 100%)')};
`;

const Language = styled.span`
    display: flex;
    align-items: center;
    justify-content: center;
    width: 16px;
    height: 14px;
    margin: 5px 14px 5px 6px;
    background: #316ac5;
`;

const Tray = styled.div`
    display: flex;
    align-items: center;
    gap: 1px;
    width: 74px;
    background: linear-gradient(#0d78c8 0%, #2bb4f6 10%, #129ae8 30%, #119cec 80%, #0a64b0 100%);
    box-shadow: inset 1px 0 #0a3f88;
`;

const TrayIcon = styled.button`
    border: 0;
    background: none;
    margin-left: ${(props) => (props.$edge ? '-7px' : '0')};
`;

const Clock = styled.span`
    margin-left: 4px;
`;

const MENUS = ['File', 'Edit', 'View', 'Insert', 'Format', 'Tools', 'Window', 'Help'];
const COLORS = [
    '#000', '#00f', '#0ff', '#0f0', '#f0f', '#f00', '#ff0', '#fff',
    '#000080', '#008080', '#008000', '#800080', '#800000', '#808000', '#808080', '#c0c0c0',
];
const TASKS = [
    ['ie', 'DAX 30 Rolli...'], ['note', 'Post-it® So...'], ['folder', 'Quotes'], ['folder', 'PSI'],
    ['folder', 'Bowlfish'], ['logo', 'MetaStock ...'], ['globe', 'Gobulling Pr...'],
    ['calculator', 'Calculadora'], ['paint', 'Sem título - ...'],
];

const Tool = ({ name, ...rest }) => (
    <ToolButton type="button" aria-label={name} {...rest}><Icon name={name} /></ToolButton>
);

const DropDown = ({ label, value, width, gap, indent, line, icon }) => (
    <SelectBox $width={width} $gap={gap}>
        {icon && <Icon name={icon} size={11} />}
        {line && (
            <svg width={line + 12} height="3" aria-hidden="true"><path d={`M10 1.500h${line}`} stroke="#000" /></svg>
        )}
        <Select aria-label={label} $indent={indent} defaultValue={value}>
            <option value={value}>{value}</option>
        </Select>
        <SelectArrow><Icon name="chevronDown" size={12} /></SelectArrow>
    </SelectBox>
);

const App = () => (
    <Page>
        <GlobalStyle />
        <TitleBar>
            <TitleGroup>
                <Icon name="logo" size={13} />
                <span>MetaStock Professional - [VOW]</span>
            </TitleGroup>
            <span>196.460</span>
            <TitleGroup>
                <PeriodLabel>Daily</PeriodLabel>
                <CaptionButton type="button" aria-label="Minimize">
                    <svg width="11" height="11"><path d="M2 9h5" stroke="#fff" strokeWidth="2" /></svg>
                </CaptionButton>
                <CaptionButton type="button" aria-label="Restore">
                    <svg width="11" height="11"><path d="M4 3V1.500h5.500V7H8M1.500 4.500h5v5h-5zM1 5h6" fill="none" stroke="#fff" /></svg>
                </CaptionButton>
                <CaptionButton type="button" aria-label="Close" $close>
                    <svg width="11" height="11"><path d="M2 2l7 7M9 2L2 9" stroke="#fff" strokeWidth="2" /></svg>
                </CaptionButton>
            </TitleGroup>
        </TitleBar>

        <MenuBar>
            <Icon name="doc" size={13} />
            {MENUS.map((menu) => <MenuItem type="button" key={menu}>{menu}</MenuItem>)}
            <MenuButtons>
                <ChildButton type="button" aria-label="Minimize chart">
                    <svg width="8" height="8"><path d="M1 7h5" stroke="#555" strokeWidth="2" /></svg>
                </ChildButton>
                <ChildButton type="button" aria-label="Restore chart">
                    <svg width="9" height="9"><path d="M3 3V1h5v4H6M1 4h5v4H1z" fill="none" stroke="#555" /></svg>
                </ChildButton>
                <ChildButton type="button" aria-label="Close chart">
                    <svg width="8" height="8"><path d="M1 1l6 6M7 1L1 7" stroke="#555" strokeWidth="2" /></svg>
                </ChildButton>
            </MenuButtons>
        </MenuBar>

        <Toolbar>
            <Grip />
            <Tool name="page" /><Tool name="open" /><Tool name="save" />
            <Separator />
            <Tool name="print" /><Tool name="preview" />
            <Separator />
            <Tool name="cut" /><Tool name="copy" /><Tool name="paste" />
            <Separator />
            <Tool name="undo" />
            <Separator />
            <Tool name="target" /><Tool name="search" />
            <DropDown label="Indicator" value="desviomm50" width={141} gap={5} indent={15} icon="formula" />
            <Tool name="expert" /><Tool name="person" />
            <ToolButton type="button"><FormulaText>f(x)</FormulaText></ToolButton>
            <Tool name="microscope" />
            <ToolButton type="button" $bold $color="#008a1c" $size={12}>$</ToolButton>
            <Tool name="binoculars" /><Tool name="people" />
            <Separator />
            <Tool name="help" />
            <Separator $tall />
            <Grip $after={12} />
            <Tool name="cascade" /><Tool name="tileColumns" /><Tool name="tileRows" />
            <Tool name="tileGrid" /><Tool name="tileStar" />
            <Separator $tall />
        </Toolbar>

        <Workspace>
            <SideBar>
                <SideGrip $top />
                <Tool name="pointer" $selected />
                <Tool name="cross" />
                <SideLine />
                <Tool name="diagonal" /><Tool name="horizontal" /><Tool name="vertical" /><Tool name="ratio" />
                <SideLine $full />
                <SideGrip />
                <Tool name="arrows" $pressed />
                <SideLine />
                <ToolButton type="button" $size={9}>abc</ToolButton>
                <Tool name="table" />
                <SideLine />
                <ShapeGroup>
                    <Tool name="ellipse" /><Tool name="rectangle" /><Tool name="triangle" />
                </ShapeGroup>
                <SideLine $full />
            </SideBar>

            <Charts>
                <Pane>
                    <Header title="VOW" value="(198.410, 200.670, 196.200, 196.460, -8.29999)" color="#000" />
                    <ChartBody top={76} height={337} axis={{ labels: PRICE_LABELS, minor: range(77, 412, 2.177), major: [410] }}>
                        <Level y={137} />
                        <g shapeRendering="crispEdges">
                            <path d={candles.dark} fill="#000" />
                            <path d={candles.hollow} fill="#fff" />
                        </g>
                        <Series points="25,353 979,186" color="#1010f0" />
                        <Series points={LONG_AVERAGE} color="#00f000" />
                        <Series points={SLOW_AVERAGE} color="#f01010" />
                        <Series points={FAST_AVERAGE} color="#1818f0" />
                    </ChartBody>
                </Pane>

                <Pane>
                    <Header title="MACD" value="(6.82937)" />
                    <ChartBody
                        top={431}
                        height={48}
                        axis={{ labels: [[445, '5'], [461, '0']], minor: range(433, 477, 3.15), major: [477] }}
                    >
                        <Level y={460} soft />
                        <Series points={MACD_SIGNAL} color="#ff1010" dash="3 2" />
                        <Series points={MACD} color="#ff1010" />
                    </ChartBody>
                </Pane>

                <Pane>
                    <Header title="Stochastic Oscillator" value="(32.9616)" />
                    <ChartBody
                        top={497}
                        height={65}
                        axis={{ labels: [[530, '50']], minor: range(500, 561, 6), major: [500, 560] }}
                    >
                        <Level y={512} soft />
                        <Level y={548} soft />
                        <Series points={STOCHASTIC_SIGNAL} color="#111" dash="3 2" />
                        <Series points={STOCHASTIC} color="#ff1818" />
                    </ChartBody>
                </Pane>

                <Pane>
                    <Header title="Relative Strength Index" value="(54.8304)" />
                    <ChartBody
                        top={580}
                        height={52}
                        axis={{ labels: [[613, '50']], minor: range(585, 630, 7) }}
                    >
                        <Level y={599} />
                        <Level y={627} />
                        <Series points={RSI} color="#ff1818" />
                    </ChartBody>
                </Pane>

                <Pane $last>
                    <ChartBody
                        top={635}
                        height={91}
                        axis={{
                            labels: [[645, '20000'], [663, '15000'], [682, '10000'], [700, '5000'], [718, '0']],
                            minor: range(637, 720, 3.7),
                        }}
                    >
                        <g shapeRendering="crispEdges">
                            <path d={volume.strong} fill="#0000dc" />
                            <path d={volume.soft} fill="#9a9aff" />
                        </g>
                        <Series points={VOLUME_AVERAGE} color="#ff1010" />
                    </ChartBody>
                    <TimeAxis height="17" viewBox="25 726 957 17" preserveAspectRatio="none">
                        <g shapeRendering="crispEdges">
                            <rect x="25" y="726" width="957" height="1" fill="#222" />
                            {range(32, 980, 15).map((x) => (
                                <rect key={x} x={x} y="727" width="1" height="3" fill="#333" />
                            ))}
                            {MONTHS.map(([x]) => <rect key={x} x={x} y="727" width="1" height="15" fill="#222" />)}
                        </g>
                        {MONTHS.map(([x, label]) => <text key={x} x={x + 1} y="740">{label}</text>)}
                    </TimeAxis>
                    <Monitor>
                        <MonitorCell>
                            <MonitorTitle>File zone</MonitorTitle>
                            <svg width="36" height="25">
                                <path d="M0 25v-4l2 1 1-2 2 1 1-1 2 1 1-9V2l2 3v12l1-12 1 3 2-3v13l1 2 3-1 2 2 2-2 1-3 1 3 3 1 2-2 2 2 3-2v7z" fill="#5bf05b" />
                            </svg>
                        </MonitorCell>
                        <MonitorCell $second>
                            <MonitorTitle>Net zone</MonitorTitle>
                            <svg width="36" height="25">
                                <path d="M0 25v-2h10v-2l1-4 1 2 1 4h23v2z" fill="#f06060" />
                            </svg>
                        </MonitorCell>
                    </Monitor>
                    <Multiplier>x1000</Multiplier>
                    <PostIt>
                        <PostItTop />
                        <PostItLogo>
                            <svg width="30" height="18"><path d="M1 9l5-4 8-1 2-2 2 2 9 1 2 5-6 5-11 1-9-3z" fill="#ffe100" stroke="#a59200" /></svg>
                            <span>Post-it</span>
                        </PostItLogo>
                        <PostItName>Notes</PostItName>
                    </PostIt>
                </Pane>

                <ScrollRow>
                    <ScrollTrack>
                        <ScrollButton type="button" aria-label="Scroll left"><Icon name="chevronLeft" size={12} /></ScrollButton>
                        <ScrollSpace />
                        <ScrollThumb>
                            <svg width="8" height="6"><path d="M.5 0v5M2.500 0v5M4.500 0v5M6.500 0v5" stroke="#8fadee" /></svg>
                        </ScrollThumb>
                        <ScrollButton type="button" aria-label="Scroll right"><Icon name="chevronRight" size={12} /></ScrollButton>
                    </ScrollTrack>
                    <ChartTools>
                        <Separator $tight />
                        <Tool name="refresh" $width={14} />
                        <ToolButton type="button" $width={14} $bold $size={9}>D</ToolButton>
                        <Separator $tight />
                        <Tool name="updown" $width={14} /><Tool name="move" $width={14} />
                        <Tool name="zoomOut" $width={14} /><Tool name="zoomIn" $width={14} />
                        <Separator $tight />
                        <Tool name="left" $width={14} /><Tool name="right" $width={14} /><Tool name="panel" $width={14} />
                    </ChartTools>
                </ScrollRow>
            </Charts>
        </Workspace>

        <BottomBar>
            <Grip />
            <DropDown label="Line style" value="" width={105} line={66} />
            <DropDown label="Line weight" value="" width={80} gap={5} line={48} />
            <Separator $tall />
            <Grip />
            <Palette>
                {COLORS.map((color) => (
                    <Swatch type="button" key={color} aria-label={color} $color={color} $active={color === '#f00'} />
                ))}
            </Palette>
            <ToolButton type="button" $width={12} aria-label="More colors">
                <svg width="6" height="4"><path d="M0 0h5L2.500 3z" fill="#000" /></svg>
            </ToolButton>
            <Separator $tall />
            <Grip $after={8} />
            <Tool name="ie" /><Tool name="ie" /><Tool name="chartOne" /><Tool name="chartTwo" />
            <Tool name="layers" /><Tool name="layers" /><Tool name="layers" />
            <Separator $tall />
            <Grip $after={8} />
            <SymbolInput aria-label="Symbol" defaultValue="VOW" />
            <Separator />
            <DropDown label="Account" value="" width={64} />
            <Separator />
            <DropDown label="Vendor" value="<No Vendor>" width={120} />
            <Separator />
            <TradeButton type="button" disabled>Trade</TradeButton>
            <Separator $tall />
        </BottomBar>

        <StatusBar>
            <span>For Help, press F1</span>
            <StatusCell $first $width={47} />
            <StatusCell $width={58} />
            <StatusCell $width={33}>22:05</StatusCell>
            <StatusCell $width={20} $color="#0a8a1c">$</StatusCell>
            <StatusCell $width={24}>NUM</StatusCell>
        </StatusBar>

        <TaskBar>
            <StartButton type="button"><Icon name="windows" size={15} />Iniciar</StartButton>
            <Tasks>
                {TASKS.map(([icon, label]) => (
                    <TaskButton type="button" key={label} $active={icon === 'logo'}>
                        <Icon name={icon} />{label}
                    </TaskButton>
                ))}
            </Tasks>
            <Language>PT</Language>
            <Tray>
                <TrayIcon type="button" aria-label="Show hidden icons" $edge><Icon name="trayBack" /></TrayIcon>
                <TrayIcon type="button" aria-label="Antivirus"><Icon name="trayRed" size={13} /></TrayIcon>
                <TrayIcon type="button" aria-label="OSD"><Icon name="trayDark" size={13} /></TrayIcon>
                <Clock>22:06</Clock>
            </Tray>
        </TaskBar>
    </Page>
);

export default App;
